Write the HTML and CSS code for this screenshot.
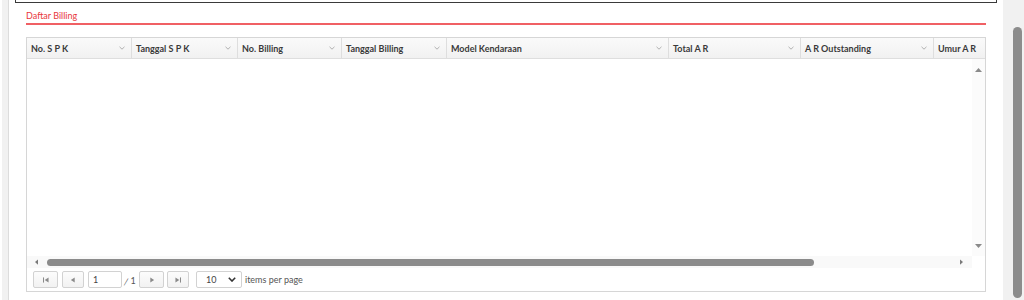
FILE: index.html
```html
<!DOCTYPE html>
<html>
<head>
<meta charset="utf-8">
<link rel="stylesheet" href="styles.css">
</head>
<body>
<div class="side-left"><div class="side-strip"></div></div>
<div class="main">
  <div class="top-box"></div>
  <div class="section">
    <div class="title">Daftar Billing</div>
    <div class="title-line"></div>
    <div class="grid">
      <div class="grid-header">
        <div class="hcell w1"><span>No. S P K</span><svg class="chev" viewBox="0 0 6 4"><polyline points="0.5,0.8 3,3.2 5.5,0.8"/></svg></div>
        <div class="hcell w2"><span>Tanggal S P K</span><svg class="chev" viewBox="0 0 6 4"><polyline points="0.5,0.8 3,3.2 5.5,0.8"/></svg></div>
        <div class="hcell w3"><span>No. Billing</span><svg class="chev" viewBox="0 0 6 4"><polyline points="0.5,0.8 3,3.2 5.5,0.8"/></svg></div>
        <div class="hcell w4"><span>Tanggal Billing</span><svg class="chev" viewBox="0 0 6 4"><polyline points="0.5,0.8 3,3.2 5.5,0.8"/></svg></div>
        <div class="hcell w5"><span>Model Kendaraan</span><svg class="chev" viewBox="0 0 6 4"><polyline points="0.5,0.8 3,3.2 5.5,0.8"/></svg></div>
        <div class="hcell w6"><span>Total A R</span><svg class="chev" viewBox="0 0 6 4"><polyline points="0.5,0.8 3,3.2 5.5,0.8"/></svg></div>
        <div class="hcell w7"><span>A R Outstanding</span><svg class="chev" viewBox="0 0 6 4"><polyline points="0.5,0.8 3,3.2 5.5,0.8"/></svg></div>
        <div class="hcell w8"><span>Umur A R</span></div>
      </div>
      <div class="grid-body">
        <div class="grid-data"></div>
        <div class="vscroll">
          <svg class="arrow" viewBox="0 0 7 4"><polygon points="0,4 3.5,0 7,4"/></svg>
          <svg class="arrow" viewBox="0 0 7 4"><polygon points="0,0 3.5,4 7,0"/></svg>
        </div>
      </div>
      <div class="hscroll-row">
        <div class="hscroll">
          <svg class="harrow" viewBox="0 0 4 7"><polygon points="4,0 0,3.5 4,7"/></svg>
          <div class="hthumb-track"><div class="hthumb"></div></div>
          <svg class="harrow" viewBox="0 0 4 7"><polygon points="0,0 4,3.5 0,7"/></svg>
        </div>
        <div class="corner"></div>
      </div>
      <div class="pager">
        <button class="pbtn first"><svg viewBox="0 0 7 7"><rect x="0" y="0.5" width="1.2" height="6"/><polygon points="6.5,0.5 2,3.5 6.5,6.5"/></svg></button>
        <button class="pbtn prev"><svg viewBox="0 0 7 7"><polygon points="5.5,0.5 1,3.5 5.5,6.5"/></svg></button>
        <input class="pinput" type="text" value="1">
        <span class="ptotal"><span class="slash">/</span> 1</span>
        <button class="pbtn next"><svg viewBox="0 0 7 7"><polygon points="1.5,0.5 6,3.5 1.5,6.5"/></svg></button>
        <button class="pbtn last"><svg viewBox="0 0 7 7"><polygon points="0.5,0.5 5,3.5 0.5,6.5"/><rect x="5.8" y="0.5" width="1.2" height="6"/></svg></button>
        <div class="psel"><span>10</span><svg viewBox="0 0 8 5"><polyline points="0.8,0.8 4,4 7.2,0.8"/></svg></div>
        <span class="plabel">items per page</span>
      </div>
    </div>
  </div>
</div>
<div class="page-scroll"><div class="page-thumb"></div></div>
</body>
</html>
```

FILE: styles.css
```css
html, body {
  margin: 0;
  padding: 0;
  height: 300px;
  overflow: hidden;
  background: #ffffff;
  font-family: Lato, "Liberation Sans", sans-serif;
  color: #333;
}
body {
  display: flex;
}
.side-left {
  width: 9px;
  flex: none;
  display: flex;
}
.side-strip {
  margin-left: 2px;
  flex: 1;
  background: #f1f1f1;
  border-right: 1px solid #dcdcdc;
}
.main {
  flex: 1;
  min-width: 0;
}
.top-box {
  margin: 0 6px;
  height: 2px;
  border: 1px solid #3a3a3a;
  border-top: none;
}
.section {
  margin: 0 17px;
}
.title {
  margin-top: 7px;
  font-size: 9px;
  line-height: 12px;
  color: #e8363c;
  padding-bottom: 1px;
}
.title-line {
  height: 2px;
  background: #f06064;
}
.grid {
  margin-top: 12px;
  border: 1px solid #d6d6d6;
  height: 255px;
  box-sizing: border-box;
  display: flex;
  flex-direction: column;
}
.grid-header {
  display: flex;
  height: 20px;
  flex: none;
  background: linear-gradient(#fafafa, #f1f1f1);
  border-bottom: 1px solid #dedede;
  overflow: hidden;
}
.hcell {
  display: flex;
  align-items: center;
  justify-content: space-between;
  box-sizing: border-box;
  padding: 0 6px 0 4px;
  border-left: 1px solid #dedede;
  font-size: 9px;
  font-weight: bold;
  color: #3a3a3a;
  white-space: nowrap;
  flex: none;
}
.hcell.w1 { width: 104px; border-left: none; }
.hcell.w2 { width: 106px; }
.hcell.w3 { width: 104px; }
.hcell.w4 { width: 105px; }
.hcell.w5 { width: 222px; }
.hcell.w6 { width: 132px; }
.hcell.w7 { width: 133px; }
.hcell.w8 { flex: 1; }
.chev {
  width: 6px;
  height: 4px;
  fill: none;
  stroke: #a8a8a8;
  stroke-width: 0.9;
}
.grid-body {
  flex: 1;
  display: flex;
}
.grid-data {
  flex: 1;
}
.vscroll {
  width: 13px;
  background: #fbfbfb;
  display: flex;
  flex-direction: column;
  justify-content: space-between;
  align-items: center;
  padding: 9px 0 8px;
}
.arrow {
  width: 7px;
  height: 4px;
  fill: #8a8a8a;
}
.hscroll-row {
  height: 12px;
  flex: none;
  display: flex;
}
.hscroll {
  flex: 1;
  background: #f9f9f9;
  display: flex;
  align-items: center;
  padding: 0 9px 0 8px;
}
.harrow {
  width: 3px;
  height: 6px;
  fill: #7a7a7a;
  flex: none;
}
.hthumb-track {
  flex: 1;
  padding: 0 0 0 9px;
}
.hthumb {
  width: 767px;
  height: 7px;
  border-radius: 4px;
  background: #8b8b8b;
}
.corner {
  width: 13px;
  background: #fff;
}
.pager {
  height: 23px;
  flex: none;
  display: flex;
  align-items: center;
  padding-left: 6px;
  font-size: 9px;
  color: #555;
}
.pbtn {
  box-sizing: border-box;
  height: 17px;
  margin: 0;
  padding: 0;
  border: 1px solid #d2d2d2;
  border-radius: 2px;
  background: linear-gradient(#fcfcfc, #f2f2f2);
  display: flex;
  align-items: center;
  justify-content: center;
}
.pbtn.first { width: 25px; margin-right: 4px; }
.pbtn.prev { width: 22px; margin-right: 4px; }
.pbtn.next { width: 25px; margin-right: 3px; }
.pbtn.last { width: 22px; }
.pbtn svg {
  width: 6px;
  height: 6px;
  fill: #8a8a8a;
}
.pinput {
  width: 34px;
  height: 17px;
  box-sizing: border-box;
  margin: 0;
  padding: 0 0 0 4px;
  border: 1px solid #d2d2d2;
  border-radius: 2px;
  font-family: Lato, "Liberation Sans", sans-serif;
  font-size: 9px;
  color: #444;
  outline: none;
}
.ptotal {
  width: 12px;
  margin: 0 3px 0 2px;
  color: #555;
  padding-top: 2px;
  white-space: nowrap;
}
.slash {
  display: inline-block;
  transform: translateY(1px) skewX(-10deg);
}
.psel {
  margin-left: 7px;
  width: 46px;
  height: 17px;
  box-sizing: border-box;
  border: 1px solid #d2d2d2;
  border-radius: 2px;
  background: #fff;
  display: flex;
  align-items: center;
  justify-content: space-between;
  padding: 0 5px 0 9px;
  color: #444;
}
.psel svg {
  width: 8px;
  height: 5px;
  fill: none;
  stroke: #333;
  stroke-width: 1.6;
}
.plabel {
  margin-left: 3px;
  color: #555;
}
.page-scroll {
  width: 21px;
  flex: none;
  background: #f1f1f1;
  display: flex;
  justify-content: flex-end;
  padding-right: 2px;
  box-sizing: border-box;
}
.page-thumb {
  width: 9px;
  margin-top: 27px;
  height: 271px;
  border-radius: 5px;
  background: #8c8c8c;
}
```
